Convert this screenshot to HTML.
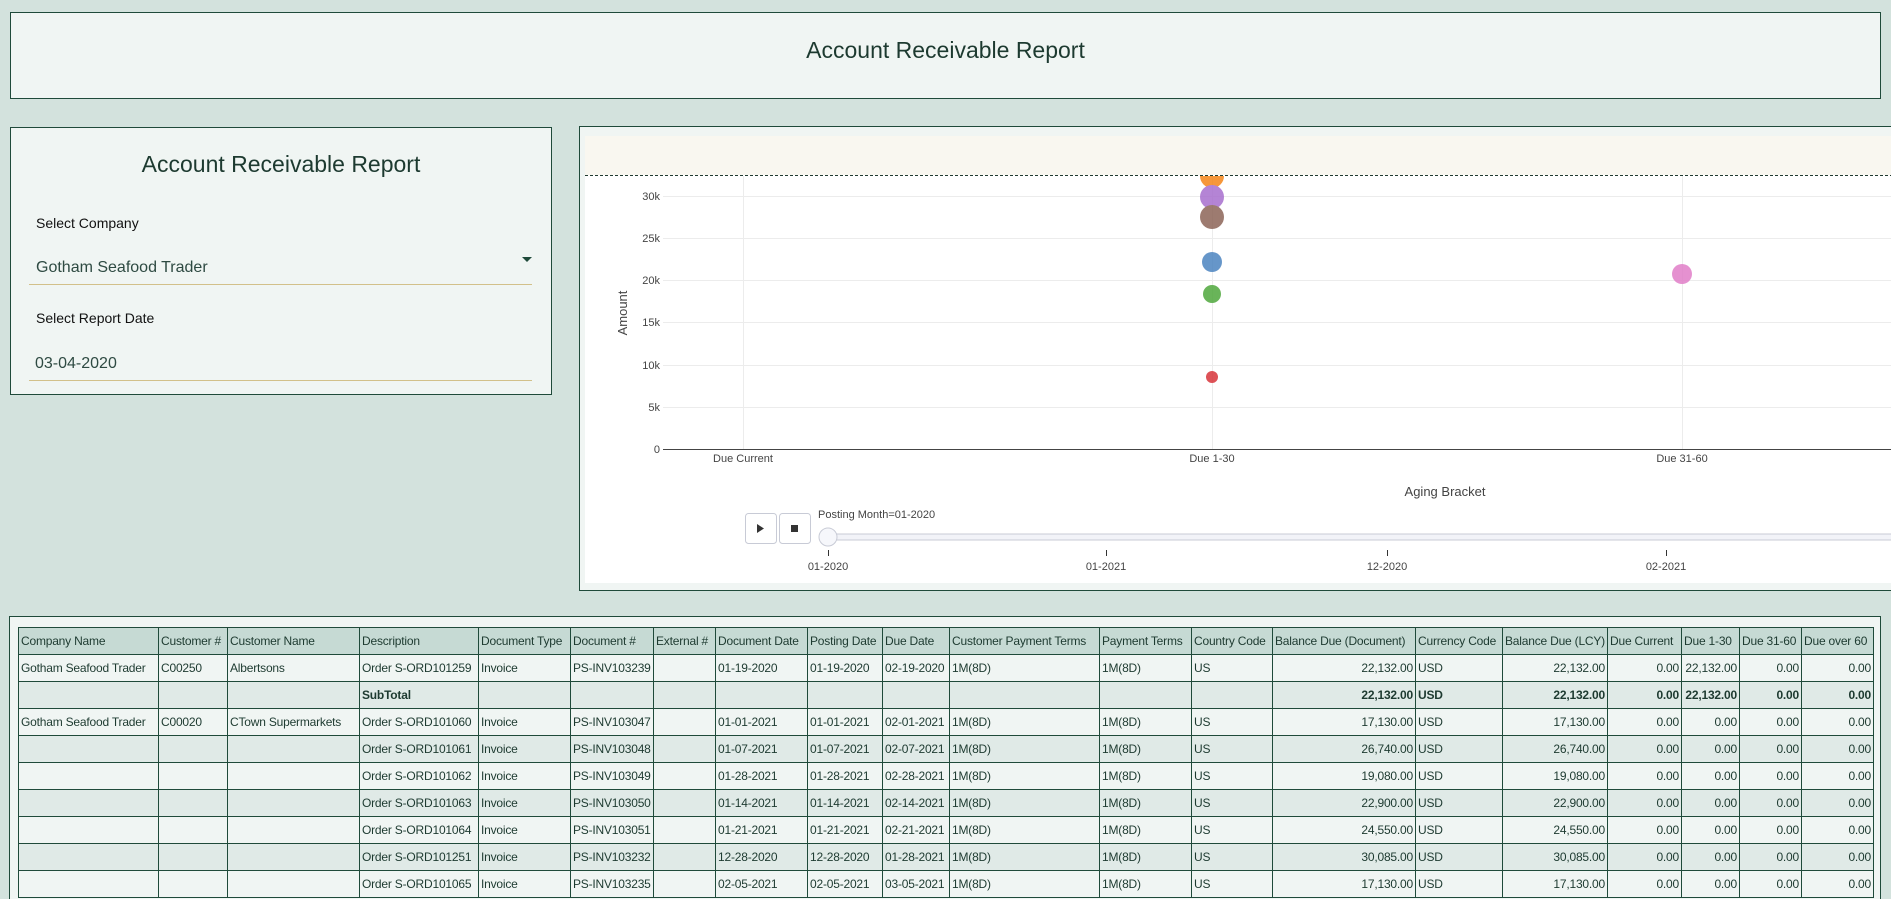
<!DOCTYPE html>
<html><head><meta charset="utf-8"><style>
*{box-sizing:border-box;margin:0;padding:0}
html,body{width:1891px;height:899px;overflow:hidden}
body{background:#d3e2dd;font-family:"Liberation Sans",sans-serif;color:#1d3a30;position:relative}
.box{position:absolute;background:#f0f5f3;border:1px solid #1f4a3a}
.t{position:absolute;white-space:nowrap}
table{position:absolute;left:18px;top:627px;border-collapse:collapse;table-layout:fixed;font-size:12px;color:#1d3a30}
td,th{border:1px solid #1f4a3a;height:27px;padding:0 2px;white-space:nowrap;overflow:hidden;font-weight:normal;text-align:left;letter-spacing:-0.2px}
th{background:#c6dad4}
tr.a td{background:#f0f5f3}
tr.b td{background:#e0eae7}
.r{text-align:right}
tr.s td{font-weight:bold}
</style></head><body>
<div class="box" style="left:10px;top:12px;width:1871px;height:87px"></div>
<div class="t" style="left:0;width:1891px;text-align:center;top:37px;font-size:23px;color:#1d3a30">Account Receivable Report</div>

<div class="box" style="left:10px;top:127px;width:542px;height:268px"></div>
<div class="t" style="left:10px;width:542px;text-align:center;top:151px;font-size:23px">Account Receivable Report</div>
<div class="t" style="left:36px;top:215px;font-size:14px;color:#111">Select Company</div>
<div class="t" style="left:36px;top:259px;font-size:16px;color:#2e4a42">Gotham Seafood Trader</div>
<div style="position:absolute;left:522px;top:257px;width:0;height:0;border-left:5px solid transparent;border-right:5px solid transparent;border-top:5px solid #1f4a3a"></div>
<div style="position:absolute;left:29px;top:284px;width:503px;height:1px;background:#d2c08a"></div>
<div class="t" style="left:36px;top:310px;font-size:14px;color:#111">Select Report Date</div>
<div class="t" style="left:35px;top:355px;font-size:16px;color:#2e4a42">03-04-2020</div>
<div style="position:absolute;left:29px;top:380px;width:503px;height:1px;background:#d2c08a"></div>

<div class="box" style="left:579px;top:126px;width:1312px;height:465px;border-right:none"></div>
<div style="position:absolute;left:585px;top:136px;width:1306px;height:447px;background:#fff"></div>
<div style="position:absolute;left:585px;top:136px;width:1306px;height:39px;background:#f9f7f0"></div>
<svg style="position:absolute;left:0;top:0" width="1891" height="899">
<line x1="585" y1="175.5" x2="1891" y2="175.5" stroke="#1f3a30" stroke-dasharray="3,2" stroke-width="1"/>
<g stroke="#ececec" stroke-width="1">
<line x1="663" y1="196.5" x2="1891" y2="196.5"/><line x1="663" y1="238.5" x2="1891" y2="238.5"/>
<line x1="663" y1="280.5" x2="1891" y2="280.5"/><line x1="663" y1="322.5" x2="1891" y2="322.5"/>
<line x1="663" y1="365.5" x2="1891" y2="365.5"/><line x1="663" y1="407.5" x2="1891" y2="407.5"/>
<line x1="743.5" y1="176" x2="743.5" y2="449"/><line x1="1212.5" y1="176" x2="1212.5" y2="449"/><line x1="1682.5" y1="176" x2="1682.5" y2="449"/>
</g>
<line x1="663" y1="449.5" x2="1891" y2="449.5" stroke="#444" stroke-width="1"/>
<g font-size="11" fill="#444" text-anchor="end" font-family="Liberation Sans">
<text x="660" y="200">30k</text><text x="660" y="242">25k</text><text x="660" y="284">20k</text><text x="660" y="326">15k</text><text x="660" y="369">10k</text><text x="660" y="411">5k</text><text x="660" y="453">0</text>
</g>
<g font-size="11" fill="#444" text-anchor="middle" font-family="Liberation Sans">
<text x="743" y="462">Due Current</text><text x="1212" y="462">Due 1-30</text><text x="1682" y="462">Due 31-60</text>
</g>
<text x="1445" y="496" font-size="13" fill="#444" text-anchor="middle" font-family="Liberation Sans">Aging Bracket</text>
<text transform="translate(627,313) rotate(-90)" font-size="13" fill="#444" text-anchor="middle" font-family="Liberation Sans">Amount</text>
<clipPath id="c"><rect x="585" y="176" width="1306" height="280"/></clipPath>
<g clip-path="url(#c)" opacity="0.85">
<circle cx="1212" cy="176" r="12" fill="#f58518"/>
<circle cx="1212" cy="197" r="12" fill="#a86fce"/>
<circle cx="1212" cy="217" r="12" fill="#8c6458"/>
<circle cx="1212" cy="262" r="10" fill="#4c84c0"/>
<circle cx="1212" cy="294" r="9" fill="#4fa83d"/>
<circle cx="1212" cy="377" r="6" fill="#d8343a"/>
<circle cx="1682" cy="274" r="10" fill="#e07ec8"/>
</g>
<rect x="745.5" y="513.5" width="31" height="30" rx="3" fill="#fff" stroke="#c8cbd6"/>
<rect x="779.5" y="513.5" width="31" height="30" rx="3" fill="#fff" stroke="#c8cbd6"/>
<path d="M757 524 L764 528.5 L757 533 Z" fill="#333"/>
<rect x="791" y="525" width="7" height="7" fill="#333"/>
<text x="818" y="518" font-size="11" fill="#444" font-family="Liberation Sans">Posting Month=01-2020</text>
<rect x="828" y="534" width="1070" height="6" rx="2" fill="#f2f3f8" stroke="#c8cbd6"/>
<circle cx="828" cy="537" r="9" fill="#f6f7fb" stroke="#c8cbd6"/>
<g stroke="#333"><line x1="828.5" y1="550" x2="828.5" y2="556"/><line x1="1106.5" y1="550" x2="1106.5" y2="556"/><line x1="1387.5" y1="550" x2="1387.5" y2="556"/><line x1="1666.5" y1="550" x2="1666.5" y2="556"/></g>
<g font-size="11" fill="#444" text-anchor="middle" font-family="Liberation Sans">
<text x="828" y="570">01-2020</text><text x="1106" y="570">01-2021</text><text x="1387" y="570">12-2020</text><text x="1666" y="570">02-2021</text>
</g>
</svg>

<div class="box" style="left:9px;top:616px;width:1872px;height:283px;border-bottom:none"></div>
<table>
<colgroup><col style="width:140px"><col style="width:69px"><col style="width:132px"><col style="width:119px"><col style="width:92px"><col style="width:83px"><col style="width:62px"><col style="width:92px"><col style="width:75px"><col style="width:67px"><col style="width:150px"><col style="width:92px"><col style="width:81px"><col style="width:143px"><col style="width:87px"><col style="width:105px"><col style="width:74px"><col style="width:58px"><col style="width:62px"><col style="width:72px"></colgroup>
<tr><th>Company Name</th><th>Customer #</th><th>Customer Name</th><th>Description</th><th>Document Type</th><th>Document #</th><th>External #</th><th>Document Date</th><th>Posting Date</th><th>Due Date</th><th>Customer Payment Terms</th><th>Payment Terms</th><th>Country Code</th><th>Balance Due (Document)</th><th>Currency Code</th><th>Balance Due (LCY)</th><th>Due Current</th><th>Due 1-30</th><th>Due 31-60</th><th>Due over 60</th></tr>
<tr class="a"><td>Gotham Seafood Trader</td><td>C00250</td><td>Albertsons</td><td>Order S-ORD101259</td><td>Invoice</td><td>PS-INV103239</td><td></td><td>01-19-2020</td><td>01-19-2020</td><td>02-19-2020</td><td>1M(8D)</td><td>1M(8D)</td><td>US</td><td class="r">22,132.00</td><td>USD</td><td class="r">22,132.00</td><td class="r">0.00</td><td class="r">22,132.00</td><td class="r">0.00</td><td class="r">0.00</td></tr>
<tr class="b s"><td></td><td></td><td></td><td>SubTotal</td><td></td><td></td><td></td><td></td><td></td><td></td><td></td><td></td><td></td><td class="r">22,132.00</td><td>USD</td><td class="r">22,132.00</td><td class="r">0.00</td><td class="r">22,132.00</td><td class="r">0.00</td><td class="r">0.00</td></tr>
<tr class="a"><td>Gotham Seafood Trader</td><td>C00020</td><td>CTown Supermarkets</td><td>Order S-ORD101060</td><td>Invoice</td><td>PS-INV103047</td><td></td><td>01-01-2021</td><td>01-01-2021</td><td>02-01-2021</td><td>1M(8D)</td><td>1M(8D)</td><td>US</td><td class="r">17,130.00</td><td>USD</td><td class="r">17,130.00</td><td class="r">0.00</td><td class="r">0.00</td><td class="r">0.00</td><td class="r">0.00</td></tr>
<tr class="b"><td></td><td></td><td></td><td>Order S-ORD101061</td><td>Invoice</td><td>PS-INV103048</td><td></td><td>01-07-2021</td><td>01-07-2021</td><td>02-07-2021</td><td>1M(8D)</td><td>1M(8D)</td><td>US</td><td class="r">26,740.00</td><td>USD</td><td class="r">26,740.00</td><td class="r">0.00</td><td class="r">0.00</td><td class="r">0.00</td><td class="r">0.00</td></tr>
<tr class="a"><td></td><td></td><td></td><td>Order S-ORD101062</td><td>Invoice</td><td>PS-INV103049</td><td></td><td>01-28-2021</td><td>01-28-2021</td><td>02-28-2021</td><td>1M(8D)</td><td>1M(8D)</td><td>US</td><td class="r">19,080.00</td><td>USD</td><td class="r">19,080.00</td><td class="r">0.00</td><td class="r">0.00</td><td class="r">0.00</td><td class="r">0.00</td></tr>
<tr class="b"><td></td><td></td><td></td><td>Order S-ORD101063</td><td>Invoice</td><td>PS-INV103050</td><td></td><td>01-14-2021</td><td>01-14-2021</td><td>02-14-2021</td><td>1M(8D)</td><td>1M(8D)</td><td>US</td><td class="r">22,900.00</td><td>USD</td><td class="r">22,900.00</td><td class="r">0.00</td><td class="r">0.00</td><td class="r">0.00</td><td class="r">0.00</td></tr>
<tr class="a"><td></td><td></td><td></td><td>Order S-ORD101064</td><td>Invoice</td><td>PS-INV103051</td><td></td><td>01-21-2021</td><td>01-21-2021</td><td>02-21-2021</td><td>1M(8D)</td><td>1M(8D)</td><td>US</td><td class="r">24,550.00</td><td>USD</td><td class="r">24,550.00</td><td class="r">0.00</td><td class="r">0.00</td><td class="r">0.00</td><td class="r">0.00</td></tr>
<tr class="b"><td></td><td></td><td></td><td>Order S-ORD101251</td><td>Invoice</td><td>PS-INV103232</td><td></td><td>12-28-2020</td><td>12-28-2020</td><td>01-28-2021</td><td>1M(8D)</td><td>1M(8D)</td><td>US</td><td class="r">30,085.00</td><td>USD</td><td class="r">30,085.00</td><td class="r">0.00</td><td class="r">0.00</td><td class="r">0.00</td><td class="r">0.00</td></tr>
<tr class="a"><td></td><td></td><td></td><td>Order S-ORD101065</td><td>Invoice</td><td>PS-INV103235</td><td></td><td>02-05-2021</td><td>02-05-2021</td><td>03-05-2021</td><td>1M(8D)</td><td>1M(8D)</td><td>US</td><td class="r">17,130.00</td><td>USD</td><td class="r">17,130.00</td><td class="r">0.00</td><td class="r">0.00</td><td class="r">0.00</td><td class="r">0.00</td></tr>
</table>
</body></html>
